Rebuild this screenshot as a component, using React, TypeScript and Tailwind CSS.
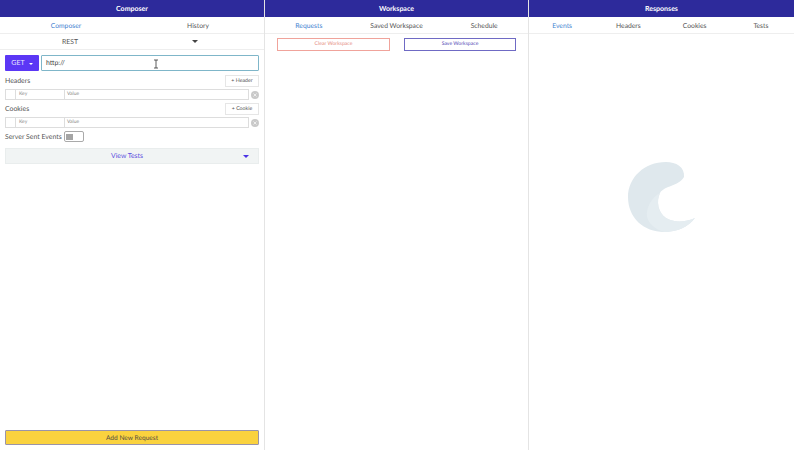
const font = { fontFamily: 'Lato, sans-serif' };

function Tabs({ items }: { items: string[] }) {
  return (
    <div className="flex h-[17px] items-center border-b border-[#eeeeee] pt-[2px] text-[6.75px] text-[#555555]">
      {items.map((item, i) => (
        <span key={item} className={i === 0 ? 'flex-1 text-center text-[#3f7fd0]' : 'flex-1 text-center'}>
          {item}
        </span>
      ))}
    </div>
  );
}

function KeyValueRow() {
  return (
    <div className="flex h-[11px] items-center">
      <div className="flex h-full w-[245px] border border-[#dddddd] text-[5px] text-[#8a8a8a]">
        <div className="w-[10px] border-r border-[#dddddd]" />
        <div className="flex w-[49px] items-center border-r border-[#dddddd] pt-[1px] pl-[3px]">Key</div>
        <div className="flex flex-1 items-center pt-[1px] pl-[2px]">Value</div>
      </div>
      <svg viewBox="0 0 8 8" className="ml-[2px] h-[8px] w-[8px]">
        <circle cx="4" cy="4" r="4" fill="#c9c9c9" />
        <path d="M2.5 2.5l3 3M5.5 2.5l-3 3" stroke="#ffffff" strokeWidth="0.7" />
      </svg>
    </div>
  );
}

function AddRow({ label, button }: { label: string; button: string }) {
  return (
    <div className="flex h-[12px] items-center justify-between">
      <span className="text-[6.9px] text-[#555555]">{label}</span>
      <div className="flex h-[12px] w-[34px] items-center justify-center border border-[#e6e6e6] pt-[1px] text-[5.25px] text-[#555555]">
        {button}
      </div>
    </div>
  );
}

function Caret({ className }: { className: string }) {
  return (
    <svg viewBox="0 0 8 4" className={className}>
      <path d="M0 0h8L4 4z" fill="currentColor" />
    </svg>
  );
}

function WaveLogo() {
  return (
    <svg viewBox="0 0 90 90" className="h-[90px] w-[90px]">
      <path
        d="M68 22C69 12 60 7 50 7 28 7 12 23 12 42c0 21 16 35 36 35 13 0 24-5 31-14-9 4-21 5-29 0-8-5-10-17-6-25 5-8 18-6 24-16z"
        fill="#dfe8ed"
      />
      <path
        d="M44 38c-9 5-14 15-13 24 2 7 8 12 17 15 13 0 24-5 31-14-9 4-21 5-29 0-8-5-10-17-6-25z"
        fill="#e5edf1"
      />
    </svg>
  );
}

export default function App() {
  return (
    <div className="flex h-[450px] w-[800px] overflow-hidden bg-white [text-rendering:geometricPrecision]" style={font}>
      <div className="flex w-[265px] flex-col border-r border-[#e4e4e4]">
        <div className="flex h-[17px] items-center justify-center bg-[#2d2a9b] pt-[1px] text-[7px] font-bold text-white">
          Composer
        </div>
        <Tabs items={['Composer', 'History']} />
        <div className="flex h-[16px] items-center border-b border-[#eeeeee] text-[6.9px] text-[#555555]">
          <span className="ml-[62px] w-[16px] pt-[1px]">REST</span>
          <Caret className="ml-[114px] h-[3px] w-[6px] text-[#444444]" />
        </div>
        <div className="flex flex-1 flex-col px-[5px] pt-[5px] pb-[5px]">
          <div className="relative flex h-[16px] gap-[2px]">
            <div className="flex w-[34px] items-center justify-center gap-[4px] rounded-[1px] bg-[#5b37f5] pt-[1px] text-[7px] text-[#e8e4ff]">
              GET
              <Caret className="h-[2px] w-[4px] text-white" />
            </div>
            <div className="flex flex-1 items-center rounded-[1px] border border-[#7fb6c9] pt-[1px] pl-[4px] text-[6.9px] text-[#444444]">
              http://
            </div>
            <svg viewBox="0 0 6 10" className="absolute top-[4px] left-[148px] h-[10px] w-[6px]">
              <path d="M1 1h4M3 1v8M1 9h4" stroke="#333333" strokeWidth="0.8" fill="none" />
            </svg>
          </div>
          <div className="mt-[4px]">
            <AddRow label="Headers" button="+ Header" />
          </div>
          <div className="mt-[2px]">
            <KeyValueRow />
          </div>
          <div className="mt-[3px]">
            <AddRow label="Cookies" button="+ Cookie" />
          </div>
          <div className="mt-[2px]">
            <KeyValueRow />
          </div>
          <div className="mt-[3px] flex h-[11px] items-center gap-[5px] text-[6.9px] text-[#555555]">
            <span className="w-[54px] pt-[1px] whitespace-nowrap">Server Sent Events</span>
            <div className="flex h-[11px] w-[20px] items-center rounded-[2px] border border-[#aaaaaa] pl-[1px]">
              <div className="h-[6px] w-[7px] bg-[#a5a5a5]" />
            </div>
          </div>
          <div className="mt-[6px] flex h-[16px] items-center border border-[#e9eded] bg-[#f1f4f4] text-[6.9px] text-[#5b4fe0]">
            <span className="ml-[105px]">View Tests</span>
            <Caret className="mr-[9px] ml-auto h-[3px] w-[6px] text-[#4a33e6]" />
          </div>
          <div className="mt-auto flex h-[15px] items-center justify-center rounded-[1px] border border-[#9a94a8] bg-[#fad23e] pt-[2px] text-[6.6px] text-[#555040]">
            Add New Request
          </div>
        </div>
      </div>

      <div className="flex w-[264px] flex-col border-r border-[#e4e4e4]">
        <div className="flex h-[17px] items-center justify-center bg-[#2d2a9b] pt-[1px] text-[7px] font-bold text-white">
          Workspace
        </div>
        <Tabs items={['Requests', 'Saved Workspace', 'Schedule']} />
        <div className="flex justify-between pt-[4px] pr-[12px] pl-[12px] text-[5.1px]">
          <div className="flex h-[13px] w-[113px] items-center justify-center border border-[#f0a39b] pt-[1px] text-[#e58a80]">
            Clear Workspace
          </div>
          <div className="flex h-[13px] w-[112px] items-center justify-center border border-[#6f6ac4] pt-[1px] text-[#4f49b5]">
            Save Workspace
          </div>
        </div>
      </div>

      <div className="flex w-[265px] flex-col">
        <div className="flex h-[17px] items-center justify-center bg-[#2d2a9b] pt-[1px] text-[7px] font-bold text-white">
          Responses
        </div>
        <Tabs items={['Events', 'Headers', 'Cookies', 'Tests']} />
        <div className="flex flex-1 items-center justify-center pr-[2px] pb-[84px]">
          <WaveLogo />
        </div>
      </div>
    </div>
  );
}
